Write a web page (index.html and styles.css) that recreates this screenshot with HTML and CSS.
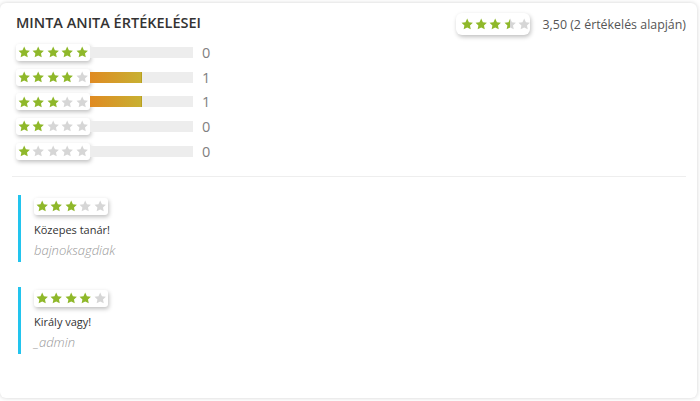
FILE: index.html
```html
<!DOCTYPE html>
<html lang="hu">
<head>
<meta charset="utf-8">
<link rel="stylesheet" href="styles.css">
</head>
<body>
<svg class="defs" width="0" height="0" aria-hidden="true">
  <defs>
    <symbol id="star" viewBox="0 0 24 24">
      <path d="M12 1l3.3 7 7.7 1-5.6 5.3 1.5 7.6L12 18.2l-6.9 3.7 1.5-7.6L1 9l7.7-1z"/>
    </symbol>
    <linearGradient id="half" x1="0" x2="1" y1="0" y2="0">
      <stop offset="50%" stop-color="#8fb82a"/>
      <stop offset="50%" stop-color="#d6d6d6"/>
    </linearGradient>
  </defs>
</svg>
<div class="card">
  <div class="head">
    <h2 class="title">MINTA ANITA ÉRTÉKELÉSEI</h2>
    <div class="summary">
      <div class="stars">
        <svg class="s on"><use href="#star"/></svg>
        <svg class="s on"><use href="#star"/></svg>
        <svg class="s on"><use href="#star"/></svg>
        <svg class="s half"><use href="#star"/></svg>
        <svg class="s"><use href="#star"/></svg>
      </div>
      <span class="avg">3,50 (2 értékelés alapján)</span>
    </div>
  </div>
  <div class="dist">
    <div class="row">
      <div class="stars"><svg class="s on"><use href="#star"/></svg><svg class="s on"><use href="#star"/></svg><svg class="s on"><use href="#star"/></svg><svg class="s on"><use href="#star"/></svg><svg class="s on"><use href="#star"/></svg></div>
      <div class="bar"></div>
      <span class="count">0</span>
    </div>
    <div class="row">
      <div class="stars"><svg class="s on"><use href="#star"/></svg><svg class="s on"><use href="#star"/></svg><svg class="s on"><use href="#star"/></svg><svg class="s on"><use href="#star"/></svg><svg class="s"><use href="#star"/></svg></div>
      <div class="bar"><div class="fill" style="width:50%"></div></div>
      <span class="count">1</span>
    </div>
    <div class="row">
      <div class="stars"><svg class="s on"><use href="#star"/></svg><svg class="s on"><use href="#star"/></svg><svg class="s on"><use href="#star"/></svg><svg class="s"><use href="#star"/></svg><svg class="s"><use href="#star"/></svg></div>
      <div class="bar"><div class="fill" style="width:50%"></div></div>
      <span class="count">1</span>
    </div>
    <div class="row">
      <div class="stars"><svg class="s on"><use href="#star"/></svg><svg class="s on"><use href="#star"/></svg><svg class="s"><use href="#star"/></svg><svg class="s"><use href="#star"/></svg><svg class="s"><use href="#star"/></svg></div>
      <div class="bar"></div>
      <span class="count">0</span>
    </div>
    <div class="row">
      <div class="stars"><svg class="s on"><use href="#star"/></svg><svg class="s"><use href="#star"/></svg><svg class="s"><use href="#star"/></svg><svg class="s"><use href="#star"/></svg><svg class="s"><use href="#star"/></svg></div>
      <div class="bar"></div>
      <span class="count">0</span>
    </div>
  </div>
  <hr class="divider">
  <div class="reviews">
    <div class="review">
      <div class="stars"><svg class="s on"><use href="#star"/></svg><svg class="s on"><use href="#star"/></svg><svg class="s on"><use href="#star"/></svg><svg class="s"><use href="#star"/></svg><svg class="s"><use href="#star"/></svg></div>
      <p class="text">Közepes tanár!</p>
      <p class="author">bajnoksagdiak</p>
    </div>
    <div class="review">
      <div class="stars"><svg class="s on"><use href="#star"/></svg><svg class="s on"><use href="#star"/></svg><svg class="s on"><use href="#star"/></svg><svg class="s on"><use href="#star"/></svg><svg class="s"><use href="#star"/></svg></div>
      <p class="text">Király vagy!</p>
      <p class="author">_admin</p>
    </div>
  </div>
</div>
</body>
</html>
```
FILE: styles.css
```css
html, body {
  margin: 0;
  padding: 0;
  background: #fff;
}
body {
  padding: 3px 3px 3px 0;
  font-family: "Open Sans", "DejaVu Sans", sans-serif;
  color: #333;
}
.defs {
  position: absolute;
  width: 0;
  height: 0;
}
.card {
  height: 395px;
  box-sizing: border-box;
  background: #fff;
  border-radius: 6px;
  box-shadow: 0 0 4px rgba(0, 0, 0, 0.18);
  padding: 10px 11px 0 16px;
}
.head {
  display: flex;
  justify-content: space-between;
  align-items: flex-start;
}
.title {
  margin: 0;
  font-size: 14.5px;
  font-weight: 600;
  color: #333;
  line-height: 20px;
}
.summary {
  display: flex;
  align-items: center;
  gap: 13px;
}
.summary .stars {
  height: 22px;
  padding: 0 5px;
  border-radius: 6px;
}
.avg {
  font-size: 12.4px;
  color: #555;
}
.stars {
  display: flex;
  align-items: center;
  gap: 2px;
  width: 74px;
  height: 17px;
  box-sizing: border-box;
  padding: 0 2px;
  background: #fff;
  border-radius: 3px;
  box-shadow: 1px 2px 4px rgba(0, 0, 0, 0.25);
}
.s {
  width: 12.4px;
  height: 12.4px;
  flex: none;
  fill: #d6d6d6;
}
.s.on {
  fill: #8fb82a;
}
.s.half {
  fill: url(#half);
}
.dist {
  margin-top: 9px;
  display: flex;
  flex-direction: column;
  gap: 7.7px;
}
.row {
  display: flex;
  align-items: center;
  height: 17px;
}
.bar {
  width: 103px;
  height: 11px;
  background: #ededed;
}
.fill {
  height: 100%;
  background: linear-gradient(90deg, #e08a22, #c8b032);
  border-right: 1px solid #b8a020;
  box-sizing: border-box;
}
.count {
  margin-left: 9px;
  font-size: 14.5px;
  color: #808080;
}
.divider {
  border: 0;
  border-top: 1px solid #eee;
  margin: 16px 0 0 -4px;
}
.reviews {
  display: flex;
  flex-direction: column;
  gap: 25px;
  margin-top: 18px;
}
.review {
  margin-left: 2px;
  border-left: 3px solid #22c4ee;
  padding: 3px 0 0 13px;
  box-sizing: border-box;
  height: 67px;
}
.text {
  margin: 7px 0 0;
  font-size: 11px;
  color: #333;
}
.author {
  margin: 4px 0 0;
  font-size: 13px;
  font-style: italic;
  font-weight: 300;
  color: #999;
}
```
